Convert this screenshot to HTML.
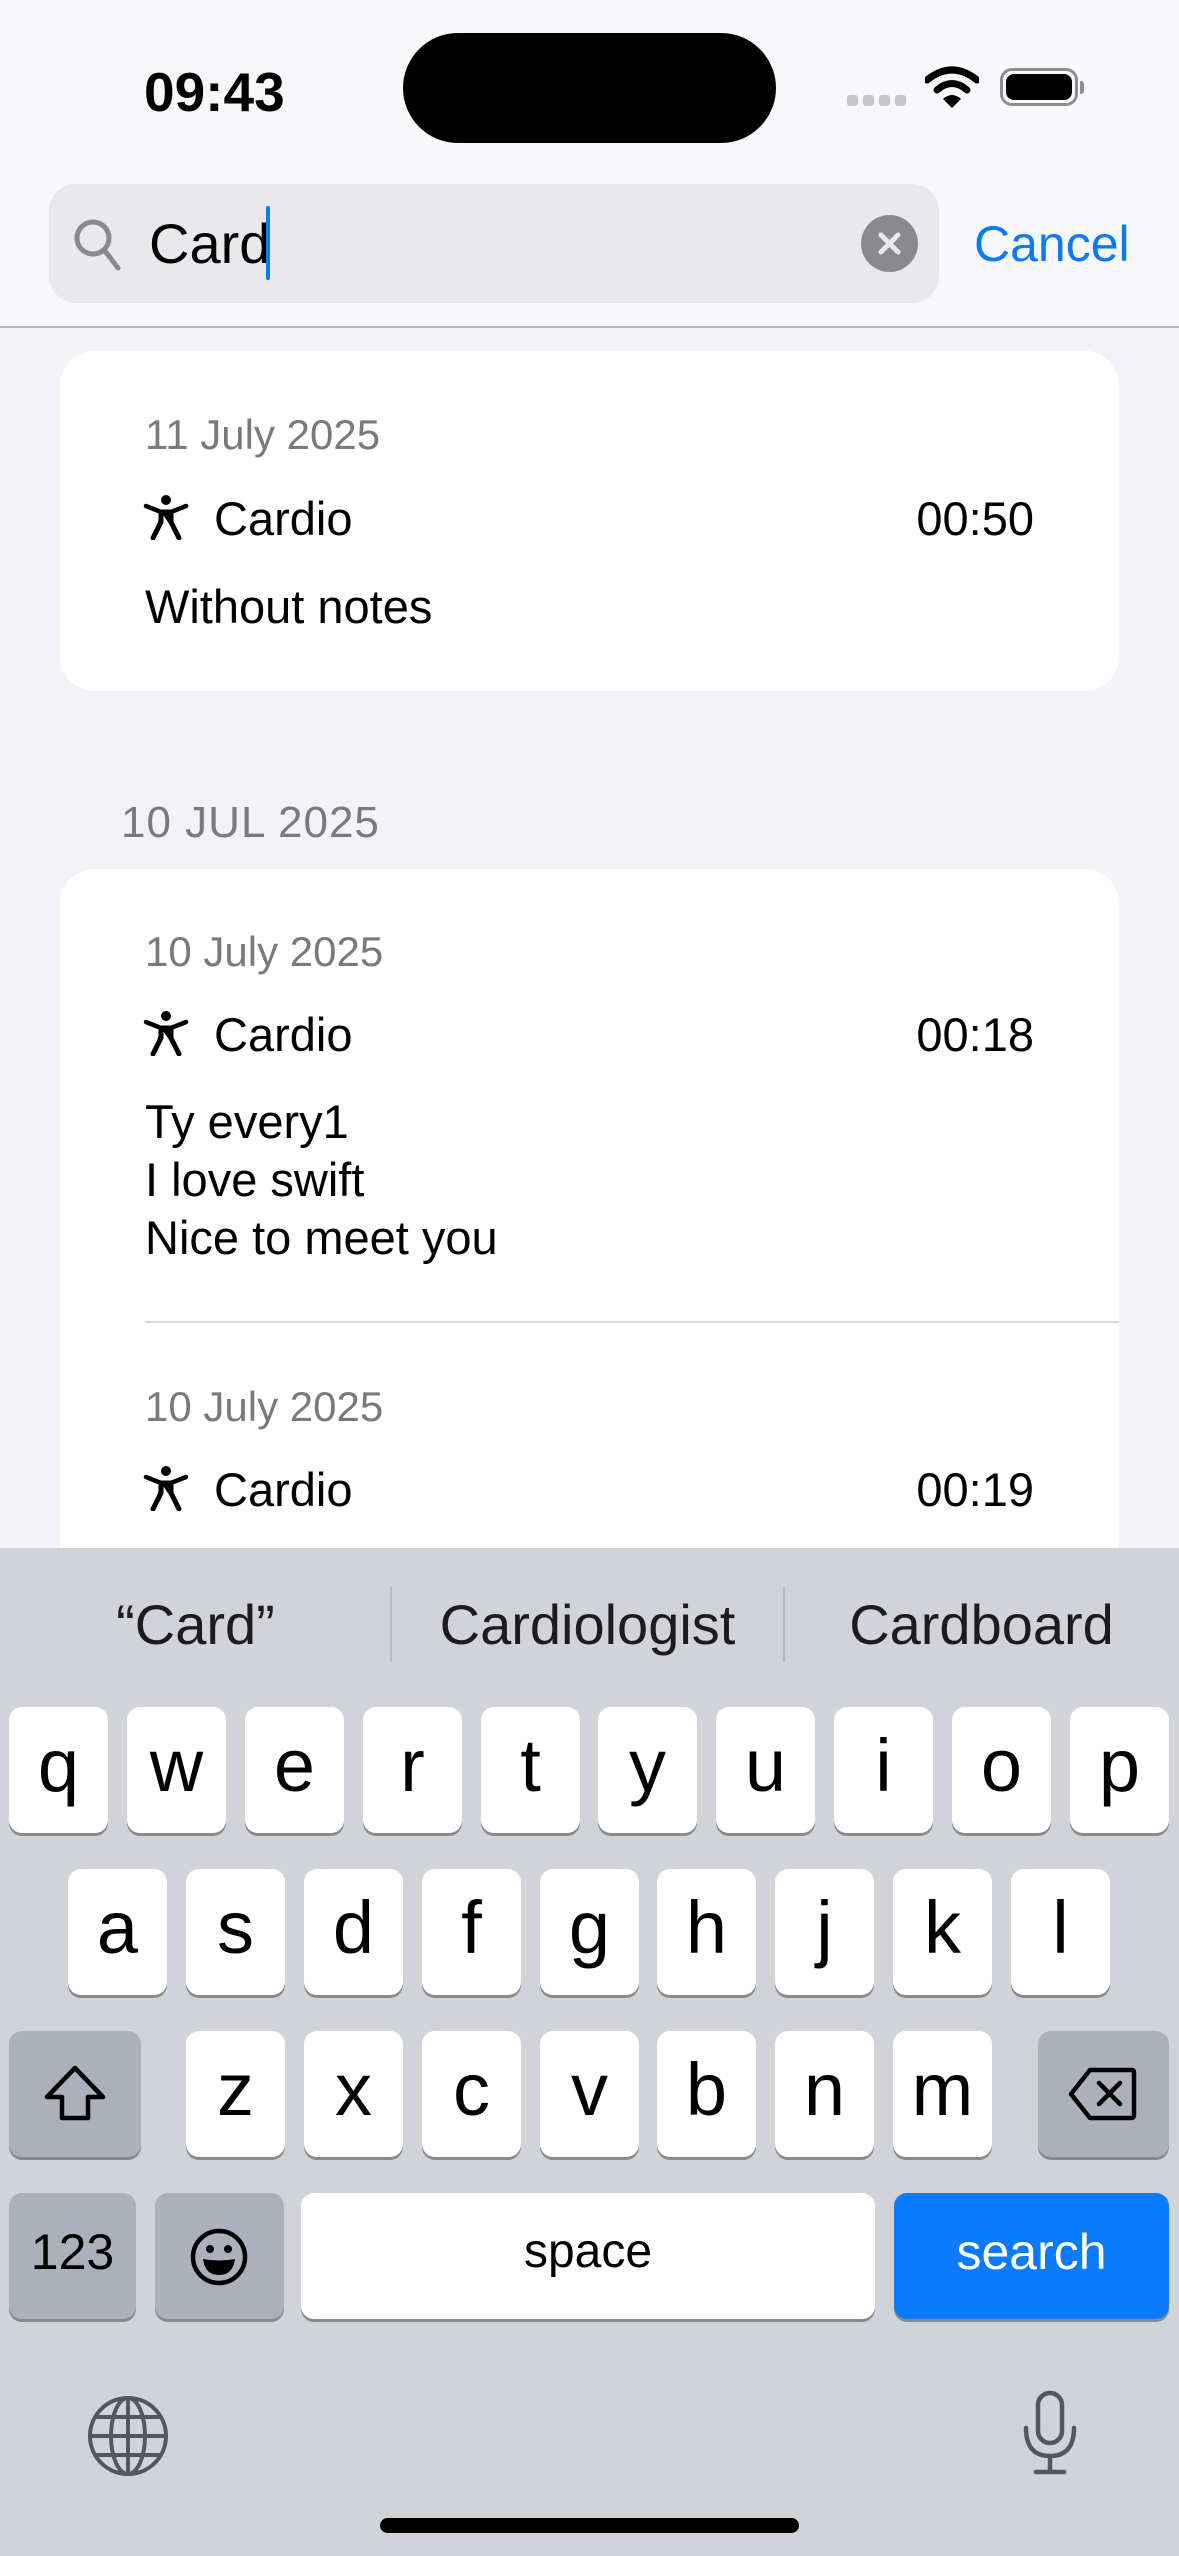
<!DOCTYPE html>
<html><head><meta charset="utf-8">
<style>
*{margin:0;padding:0;box-sizing:border-box}
body{width:1179px;height:2556px;position:relative;overflow:hidden;background:#f2f2f7;font-family:"Liberation Sans",sans-serif;color:#000}
.a{position:absolute}
.top{left:0;top:0;width:1179px;height:328px;background:#f8f8fa;border-bottom:2px solid #b9b9bd}
.card{left:60px;width:1059px;background:#fff;border-radius:34px}
.date{font-size:42px;color:#7a7a7e;left:145px;line-height:1}
.body{font-size:47px;line-height:1}
.kb{left:0;top:1548px;width:1179px;height:1008px;background:#d1d3d9}
.k{position:absolute;width:99px;height:126px;background:#fff;border-radius:13px;box-shadow:0 3px 0 #898a8d;font-size:74px;text-align:center;line-height:118px}
.s{background:#abb0ba}
.pred{font-size:56px;color:#1c1c1e;top:1597px;line-height:1;text-align:center}
</style></head><body>
<div class="a top"></div>
<div class="a" style="left:144px;top:60px;font-size:55px;font-weight:bold;letter-spacing:0px">09:43</div>
<div class="a" style="left:403px;top:33px;width:373px;height:110px;background:#000;border-radius:55px"></div>
<div class="a" style="left:847px;top:95px;width:11px;height:11px;border-radius:3px;background:#c6c6c8;box-shadow:16px 0 0 #c6c6c8,32px 0 0 #c6c6c8,48px 0 0 #c6c6c8"></div>
<svg class="a" style="left:925px;top:66px" width="54" height="42" viewBox="0 0 54 42"><path d="M2 14 Q27 -6 52 14" stroke="#000" stroke-width="7" fill="none" stroke-linecap="round"/><path d="M12 24 Q27 11 42 24" stroke="#000" stroke-width="7" fill="none" stroke-linecap="round"/><path d="M18 33 L27 42 L36 33 Q27 25 18 33Z" fill="#000"/></svg>
<div class="a" style="left:1000px;top:68px;width:78px;height:38px;border:3px solid #8e8e92;border-radius:12px;padding:3px"><div style="width:100%;height:100%;background:#000;border-radius:8px"></div></div>
<div class="a" style="left:1080px;top:81px;width:4px;height:13px;background:#8e8e92;border-radius:0 3px 3px 0"></div>

<div class="a" style="left:49px;top:184px;width:890px;height:119px;background:#e8e8ed;border-radius:27px"></div>
<svg class="a" style="left:70px;top:216px" width="60" height="60" viewBox="0 0 60 60"><circle cx="23" cy="22" r="16" stroke="#8a8a8e" stroke-width="5" fill="none"/><path d="M35 35 L48 52" stroke="#8a8a8e" stroke-width="5" stroke-linecap="round"/></svg>
<div class="a" style="left:149px;top:216px;font-size:56px;line-height:1">Card</div>
<div class="a" style="left:266px;top:206px;width:4px;height:74px;background:#0a7aff;border-radius:2px"></div>
<div class="a" style="left:861px;top:215px;width:57px;height:57px;border-radius:50%;background:#8a8a8e"></div>
<svg class="a" style="left:861px;top:215px" width="57" height="57"><path d="M20 20L37 37M37 20L20 37" stroke="#e8e8ed" stroke-width="5" stroke-linecap="round"/></svg>
<div class="a" style="left:974px;top:219px;font-size:50px;color:#0a7aff;line-height:1">Cancel</div>

<div class="a card" style="top:351px;height:340px"></div>
<div class="a date" style="top:414px">11 July 2025</div>
<svg class="a" style="left:143px;top:494px" width="46" height="46" viewBox="0 0 46 46"><circle cx="23" cy="6" r="5"/><path d="M3 12 L23 20 L43 12" stroke="#000" stroke-width="4.5" fill="none" stroke-linecap="round"/><path d="M18 18 L28 18 L28 28 L36 44 M18 18 L18 28 L10 44" stroke="#000" stroke-width="5" fill="#000" stroke-linecap="round" stroke-linejoin="round"/></svg>
<div class="a body" style="left:214px;top:495px">Cardio</div>
<div class="a body" style="left:884px;top:495px;width:150px;text-align:right">00:50</div>
<div class="a body" style="left:145px;top:583px">Without notes</div>

<div class="a" style="left:121px;top:801px;font-size:44px;color:#7a7a7e;line-height:1;letter-spacing:1px">10 JUL 2025</div>
<div class="a card" style="top:869px;height:760px"></div>
<div class="a date" style="top:931px">10 July 2025</div>
<svg class="a" style="left:143px;top:1010px" width="46" height="46" viewBox="0 0 46 46"><circle cx="23" cy="6" r="5"/><path d="M3 12 L23 20 L43 12" stroke="#000" stroke-width="4.5" fill="none" stroke-linecap="round"/><path d="M18 18 L28 18 L28 28 L36 44 M18 18 L18 28 L10 44" stroke="#000" stroke-width="5" fill="#000" stroke-linecap="round" stroke-linejoin="round"/></svg>
<div class="a body" style="left:214px;top:1011px">Cardio</div>
<div class="a body" style="left:884px;top:1011px;width:150px;text-align:right">00:18</div>
<div class="a body" style="left:145px;top:1093px;line-height:58px">Ty every1<br>I love swift<br>Nice to meet you</div>
<div class="a" style="left:145px;top:1321px;width:974px;height:2px;background:#d8d8dc"></div>
<div class="a date" style="top:1386px">10 July 2025</div>
<svg class="a" style="left:143px;top:1465px" width="46" height="46" viewBox="0 0 46 46"><circle cx="23" cy="6" r="5"/><path d="M3 12 L23 20 L43 12" stroke="#000" stroke-width="4.5" fill="none" stroke-linecap="round"/><path d="M18 18 L28 18 L28 28 L36 44 M18 18 L18 28 L10 44" stroke="#000" stroke-width="5" fill="#000" stroke-linecap="round" stroke-linejoin="round"/></svg>
<div class="a body" style="left:214px;top:1466px">Cardio</div>
<div class="a body" style="left:884px;top:1466px;width:150px;text-align:right">00:19</div>

<div class="a kb"></div>
<div class="a pred" style="left:0;width:391px">“Card”</div>
<div class="a pred" style="left:391px;width:393px">Cardiologist</div>
<div class="a pred" style="left:784px;width:395px">Cardboard</div>
<div class="a" style="left:390px;top:1587px;width:2px;height:75px;background:#b8bac0"></div>
<div class="a" style="left:783px;top:1587px;width:2px;height:75px;background:#b8bac0"></div>

<div class="k" style="left:9px;top:1707px">q</div>
<div class="k" style="left:127px;top:1707px">w</div>
<div class="k" style="left:245px;top:1707px">e</div>
<div class="k" style="left:363px;top:1707px">r</div>
<div class="k" style="left:481px;top:1707px">t</div>
<div class="k" style="left:598px;top:1707px">y</div>
<div class="k" style="left:716px;top:1707px">u</div>
<div class="k" style="left:834px;top:1707px">i</div>
<div class="k" style="left:952px;top:1707px">o</div>
<div class="k" style="left:1070px;top:1707px">p</div>

<div class="k" style="left:68px;top:1869px">a</div>
<div class="k" style="left:186px;top:1869px">s</div>
<div class="k" style="left:304px;top:1869px">d</div>
<div class="k" style="left:422px;top:1869px">f</div>
<div class="k" style="left:540px;top:1869px">g</div>
<div class="k" style="left:657px;top:1869px">h</div>
<div class="k" style="left:775px;top:1869px">j</div>
<div class="k" style="left:893px;top:1869px">k</div>
<div class="k" style="left:1011px;top:1869px">l</div>

<div class="k s" style="left:9px;top:2031px;width:132px"></div>
<svg class="a" style="left:42px;top:2064px" width="66" height="60" viewBox="0 0 66 60"><path d="M33 4 L5 33 L20 33 L20 54 L46 54 L46 33 L61 33 Z" fill="none" stroke="#000" stroke-width="4.5" stroke-linejoin="round"/></svg>
<div class="k" style="left:186px;top:2031px">z</div>
<div class="k" style="left:304px;top:2031px">x</div>
<div class="k" style="left:422px;top:2031px">c</div>
<div class="k" style="left:540px;top:2031px">v</div>
<div class="k" style="left:657px;top:2031px">b</div>
<div class="k" style="left:775px;top:2031px">n</div>
<div class="k" style="left:893px;top:2031px">m</div>
<div class="k s" style="left:1038px;top:2031px;width:131px"></div>
<svg class="a" style="left:1068px;top:2066px" width="70" height="56" viewBox="0 0 70 56"><path d="M22 4 L64 4 Q66 4 66 7 L66 49 Q66 52 63 52 L22 52 L3 28 Z" fill="none" stroke="#000" stroke-width="4.5" stroke-linejoin="round"/><path d="M31 17 L52 38 M52 17 L31 38" stroke="#000" stroke-width="4.5" stroke-linecap="round"/></svg>

<div class="k s" style="left:9px;top:2193px;width:127px;font-size:50px">123</div>
<div class="k s" style="left:155px;top:2193px;width:129px"></div>
<svg class="a" style="left:188px;top:2226px" width="62" height="62" viewBox="0 0 62 62"><circle cx="31" cy="31" r="26" fill="none" stroke="#000" stroke-width="4.5"/><circle cx="22" cy="23" r="4"/><circle cx="40" cy="23" r="4"/><path d="M15 33 Q31 36 47 33 Q45 49 31 49 Q17 49 15 33Z" fill="#000"/></svg>
<div class="k" style="left:301px;top:2193px;width:574px;font-size:48px">space</div>
<div class="k" style="left:894px;top:2193px;width:275px;background:#0a7aff;color:#fff;font-size:50px">search</div>

<svg class="a" style="left:87px;top:2395px" width="82" height="82" viewBox="0 0 82 82"><g fill="none" stroke="#55575c" stroke-width="4"><circle cx="41" cy="41" r="38"/><ellipse cx="41" cy="41" rx="17" ry="38"/><path d="M41 3V79M3 41H79M9 22H73M9 60H73"/></g></svg>
<svg class="a" style="left:1020px;top:2390px" width="60" height="88" viewBox="0 0 60 88"><g fill="none" stroke="#55575c" stroke-width="4.5" stroke-linecap="round"><rect x="18" y="3" width="24" height="50" rx="12"/><path d="M6 38 Q6 66 30 66 Q54 66 54 38M30 66V82M16 82H44"/></g></svg>
<div class="a" style="left:380px;top:2518px;width:419px;height:15px;background:#000;border-radius:8px"></div>
</body></html>
